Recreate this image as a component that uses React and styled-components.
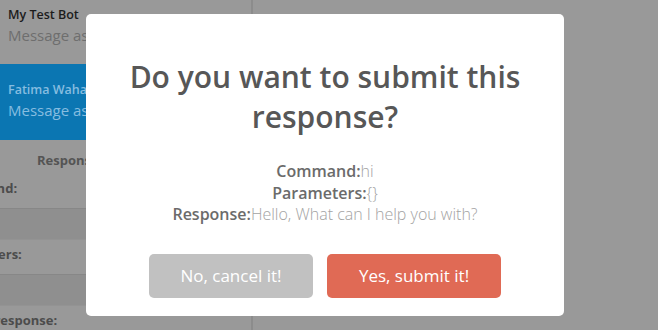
import React from "react"
import styled, { createGlobalStyle } from "styled-components"

const GlobalStyle = createGlobalStyle`
    * { box-sizing: border-box; }
    body {
        margin: 0;
        font-family: "Open Sans", "Liberation Sans", sans-serif;
        background: #999999;
    }
`

const Page = styled.div`
    display: grid;
    grid-template-columns: 253px 1fr;
    height: 330px;
    background: #999999;
    overflow: hidden;
`

const Sidebar = styled.aside`
    border-right: 2px solid #8c8c8c;
    overflow: hidden;
    display: flex;
    flex-direction: column;
`

const ChatItem = styled.div`
    flex-shrink: 0;
    height: ${p => p.$active ? "76px" : "64px"};
    padding: ${p => p.$active ? "16px 8px 0" : "5px 8px 0"};
    background: ${p => p.$active ? "#0b76b2" : "transparent"};
    white-space: nowrap;
`

const ChatName = styled.div`
    font-size: 12.5px;
    font-weight: 600;
    line-height: 20px;
    color: ${p => p.$active ? "#86bde0" : "#1c1c1c"};
`

const ChatPreview = styled.div`
    font-size: 15px;
    line-height: 21px;
    color: ${p => p.$active ? "#86bde0" : "#6e6e6e"};
`

const DetailsHeading = styled.div`
    flex-shrink: 0;
    padding: 10px 0 0 37px;
    font-size: 13px;
    font-weight: 700;
    line-height: 20px;
    color: #545454;
    white-space: nowrap;
`

const Details = styled.div`
    flex-shrink: 0;
    margin-left: -120px;
    width: 204px;
    padding-top: 4px;
`

const FieldLabel = styled.div`
    height: 34px;
    padding-top: 4px;
    font-size: 13px;
    font-weight: 700;
    line-height: 20px;
    text-align: center;
    color: #4c4c4c;
    white-space: nowrap;
`

const FieldBox = styled.div`
    width: 373px;
    height: 32px;
    background: #8f8f8f;
    border-top: 1px solid #878787;
    border-bottom: 1px solid #939393;
`

const Main = styled.main`
    background: #999999;
`

const Overlay = styled.div`
    position: fixed;
    inset: 0;
    display: flex;
    justify-content: center;
    align-items: flex-start;
    padding: 14px 8px 0 0;
`

const Modal = styled.div`
    width: 478px;
    height: 302px;
    background: #ffffff;
    border-radius: 5px;
    padding: 43px 17px 0;
    text-align: center;
`

const Title = styled.h2`
    margin: 0;
    font-size: 30px;
    font-weight: 600;
    line-height: 40px;
    color: #575757;
`

const Summary = styled.div`
    margin-top: 24px;
    font-size: 16px;
    line-height: 21.5px;
    color: #a3a3a3;
    font-weight: 300;
`

const SummaryLabel = styled.span`
    font-weight: 600;
    color: #6b6b6b;
`

const Actions = styled.div`
    display: flex;
    justify-content: center;
    gap: 14px;
    margin-top: 28px;
`

const Button = styled.button`
    width: ${p => p.$confirm ? "174px" : "164px"};
    height: 44px;
    border: none;
    border-radius: 5px;
    background: ${p => p.$confirm ? "#e06a55" : "#c1c1c1"};
    color: #ffffff;
    font-family: inherit;
    font-size: 17px;
    font-weight: 500;
    cursor: pointer;
`

const chats = [
    { name: "My Test Bot", preview: "Message assistant" },
    { name: "Fatima Wahab", preview: "Message assistant", active: true },
]

export default function App() {
    return (
        <>
            <GlobalStyle />
            <Page>
                <Sidebar>
                    {chats.map((c, i) => (
                        <ChatItem key={i} $active={c.active}>
                            <ChatName $active={c.active}>{c.name}</ChatName>
                            <ChatPreview $active={c.active}>{c.preview}</ChatPreview>
                        </ChatItem>
                    ))}
                    <DetailsHeading>Response Details</DetailsHeading>
                    <Details>
                        <FieldLabel>Command:</FieldLabel>
                        <FieldBox />
                        <FieldLabel>Parameters:</FieldLabel>
                        <FieldBox />
                        <FieldLabel>Expected bot response:</FieldLabel>
                    </Details>
                </Sidebar>
                <Main />
            </Page>
            <Overlay>
                <Modal>
                    <Title>Do you want to submit this response?</Title>
                    <Summary>
                        <div><SummaryLabel>Command:</SummaryLabel>hi</div>
                        <div><SummaryLabel>Parameters:</SummaryLabel>{"{}"}</div>
                        <div><SummaryLabel>Response:</SummaryLabel>Hello, What can I help you with?</div>
                    </Summary>
                    <Actions>
                        <Button>No, cancel it!</Button>
                        <Button $confirm>Yes, submit it!</Button>
                    </Actions>
                </Modal>
            </Overlay>
        </>
    )
}
